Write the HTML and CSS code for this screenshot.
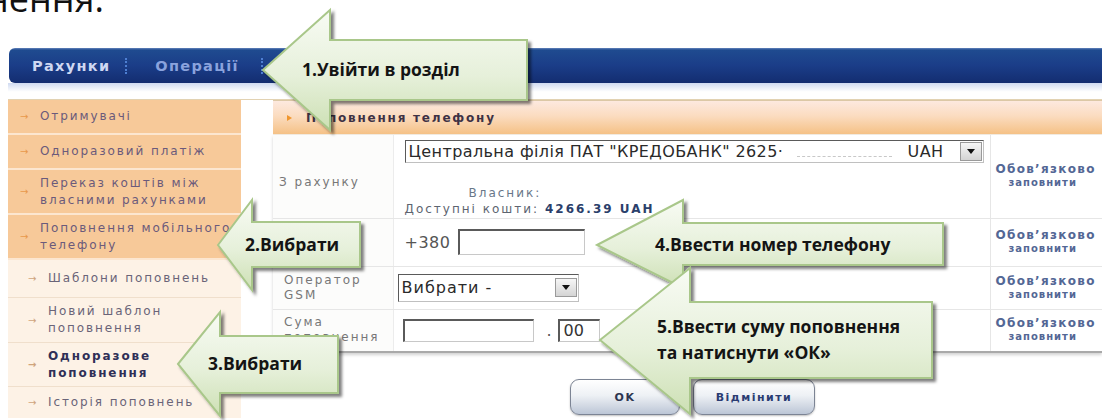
FILE: index.html
```html
<!DOCTYPE html>
<html lang="uk">
<head>
<meta charset="utf-8">
<title>Поповнення телефону</title>
<link rel="stylesheet" href="styles.css">
</head>
<body>
<div class="slide">
  <div class="slide-title"><span>нення.</span></div>

  <div class="bank">
    <nav class="topnav">
      <span class="nav-link">Рахунки</span>
      <span class="nav-sep"></span>
      <span class="nav-link muted">Операції</span>
      <span class="nav-sep last"></span>
    </nav>
    <div class="nav-fade"></div>

    <div class="workspace">
      <ul class="sidebar">
        <li class="menu-item"><span class="bullet">→</span>Отримувачі</li>
        <li class="menu-item"><span class="bullet">→</span>Одноразовий платіж</li>
        <li class="menu-item double"><span class="bullet">→</span><span>Переказ коштів між<br>власними рахунками</span></li>
        <li class="menu-item double"><span class="bullet">→</span><span>Поповнення мобільного<br>телефону</span></li>
        <li class="sub-item"><span class="bullet">→</span>Шаблони поповнень</li>
        <li class="sub-item double"><span class="bullet">→</span><span>Новий шаблон<br>поповнення</span></li>
        <li class="sub-item double current"><span class="bullet">→</span><span>Одноразове<br>поповнення</span></li>
        <li class="sub-item"><span class="bullet">→</span>Історія поповнень</li>
      </ul>

      <main class="panel">
        <div class="panel-head"><span class="head-mark"></span>Поповнення телефону</div>

        <table class="form">
          <colgroup>
            <col class="col-label">
            <col class="col-field">
            <col>
          </colgroup>
          <tr class="row-account">
            <td class="label-cell">З рахунку</td>
            <td class="field-cell">
              <div class="select wide">
                <span>Центральна філія ПАТ "КРЕДОБАНК" 2625·</span>
                <span class="masked"></span>
                <span class="currency">UAH</span>
                <span class="drop"></span>
              </div>
              <div class="owner">Власник:</div>
              <div class="funds">Доступні кошти: <b>4266.39 UAH</b></div>
            </td>
            <td class="note-cell"><span class="note-main">Обов’язково</span><span class="note-sub">заповнити</span></td>
          </tr>
          <tr class="row-phone">
            <td class="label-cell"></td>
            <td class="field-cell"><span class="prefix">+380</span><span class="textbox phone"></span></td>
            <td class="note-cell"><span class="note-main">Обов’язково</span><span class="note-sub">заповнити</span></td>
          </tr>
          <tr class="row-operator">
            <td class="label-cell">Оператор<br>GSM</td>
            <td class="field-cell">
              <div class="select narrow"><span class="select-value">Вибрати -</span><span class="drop"></span></div>
            </td>
            <td class="note-cell"><span class="note-main">Обов’язково</span><span class="note-sub">заповнити</span></td>
          </tr>
          <tr class="row-amount">
            <td class="label-cell">Сума<br>поповнення</td>
            <td class="field-cell"><span class="textbox sum"></span><span class="dot">.</span><span class="textbox cents">00</span></td>
            <td class="note-cell"><span class="note-main">Обов’язково</span><span class="note-sub">заповнити</span></td>
          </tr>
        </table>

        <div class="actions">
          <button class="btn btn-ok">OK</button>
          <button class="btn btn-cancel">Відмінити</button>
        </div>
      </main>
    </div>
  </div>

  <svg class="callouts" width="1102" height="420" viewBox="0 0 1102 420">
    <defs>
      <linearGradient id="calloutFill" x1="0" y1="0" x2="0" y2="1">
        <stop offset="0" stop-color="#f8fbf4"/>
        <stop offset="0.55" stop-color="#e6f0da"/>
        <stop offset="1" stop-color="#cde0b4"/>
      </linearGradient>
      <filter id="calloutShadow" x="-10%" y="-10%" width="130%" height="140%">
        <feDropShadow dx="3" dy="3" stdDeviation="1.4" flood-color="#000" flood-opacity="0.5"/>
      </filter>
    </defs>
    <g class="callout-shapes" filter="url(#calloutShadow)">
      <polygon class="callout-shape" points="263,70 330,10 330,40 527,40 527,100 330,100 330,130"/>
      <polygon class="callout-shape" points="218,245 252,200 252,222 360,222 360,267 252,267 252,290"/>
      <polygon class="callout-shape" points="178,364 220,312 220,336 338,336 338,393 220,393 220,416"/>
      <polygon class="callout-shape" points="597,245 683,200 683,223 943,223 943,265 683,265 683,288"/>
      <polygon class="callout-shape" points="600,340 690,268 690,302 932,302 932,378 690,378 690,414"/>
    </g>
    <text class="callout-text" x="302" y="76">1.Увійти в розділ</text>
    <text class="callout-text" x="245" y="251">2.Вибрати</text>
    <text class="callout-text" x="208" y="370">3.Вибрати</text>
    <text class="callout-text" x="655" y="251">4.Ввести номер телефону</text>
    <text class="callout-text" x="657" y="333">5.Ввести суму поповнення</text>
    <text class="callout-text" x="657" y="359">та натиснути «ОК»</text>
  </svg>
</div>
</body>
</html>
```

FILE: styles.css
```css
* { box-sizing: border-box; }

html, body { margin: 0; }

body {
  width: 1102px;
  height: 420px;
  overflow: hidden;
  background: #fff;
  font-family: "DejaVu Sans", Verdana, sans-serif;
}

.slide {
  position: relative;
  width: 1102px;
  height: 420px;
  overflow: hidden;
}

/* slide heading, only its lower edge shows */
.slide-title {
  height: 14px;
  overflow: hidden;
  font-family: "Open Sans", sans-serif;
  font-size: 36px;
  line-height: 36px;
  color: #111;
  white-space: nowrap;
}
.slide-title span { display: block; margin: -19px 0 0 -14px; }

.bank { margin: 34px 0 0 8px; }

/* top navigation */
.topnav {
  height: 35px;
  margin-left: 1px;
  border-radius: 6px 0 0 6px;
  background: linear-gradient(#6384bb 0, #1f4b90 2px, #1b3d88 50%, #132d70 100%);
  display: flex;
  align-items: center;
  padding-left: 23px;
  font-weight: bold;
  font-size: 14.5px;
  letter-spacing: 1.3px;
}
.nav-link { color: #cfd8f2; }
.nav-link.muted { color: #8aa3dd; }
.nav-sep {
  width: 0;
  height: 16px;
  border-left: 2px dotted #4e7fd2;
  margin: 0 28px 0 15px;
}
.nav-sep.last { margin-left: 22px; }

.nav-fade {
  height: 17px;
  background: linear-gradient(#cfdaf1, #ffffff 55%);
  border-bottom: 1px solid #e2d2b2;
}

.workspace { display: flex; gap: 32px; }

/* side menu */
.sidebar {
  width: 233px;
  flex: none;
  list-style: none;
  margin: 0;
  padding: 0;
  font-size: 12px;
  letter-spacing: 1.9px;
  line-height: 17px;
  color: #6b5a7b;
  white-space: nowrap;
}
.sidebar li { display: flex; align-items: center; }
.bullet {
  width: 20px;
  flex: none;
  font-size: 10px;
  letter-spacing: 0;
  color: #e8994c;
}
.menu-item {
  background: #f7c999;
  border-bottom: 2px solid #fce6d0;
  min-height: 35px;
  padding-left: 12px;
}
.menu-item.double { min-height: 45px; }
.sub-item {
  background: #fdf2e6;
  border-bottom: 1px solid #f0dfcc;
  min-height: 38px;
  padding-left: 20px;
  color: #6a6478;
}
.sub-item .bullet { color: #cfa47c; }
.sub-item.double { min-height: 45px; }
.sub-item.current { min-height: 44px; font-weight: bold; color: #2f2f57; }
.sub-item:last-child { border-bottom: 0; min-height: 31px; }

/* content panel */
.panel { flex: 1; min-width: 0; }

.panel-head {
  height: 35px;
  border-top: 1px solid #dcc8a6;
  border-bottom: 1px solid #f3ece2;
  background: linear-gradient(#fde9df, #fbdcc0 45%, #f5c186);
  display: flex;
  align-items: center;
  padding-left: 14px;
  font-weight: bold;
  font-size: 12px;
  letter-spacing: 1.8px;
  color: #3e3245;
  white-space: nowrap;
}
.head-mark {
  width: 0;
  height: 0;
  border-left: 5px solid #f0962e;
  border-top: 3.5px solid transparent;
  border-bottom: 3.5px solid transparent;
  margin-right: 14px;
}

.form {
  width: 100%;
  border-collapse: collapse;
  table-layout: fixed;
  font-size: 12px;
  letter-spacing: 2px;
  color: #777;
  border-bottom: 2px solid #a9a9a9;
  box-shadow: 0 2px 3px rgba(0, 0, 0, 0.18);
  white-space: nowrap;
}
.col-label { width: 120px; }
.col-field { width: 597px; }

.form td {
  padding: 0;
  border-bottom: 1px solid #e6e6e6;
  vertical-align: middle;
}
.row-account td { height: 83px; }
.row-phone td { height: 48px; }
.row-operator td { height: 43px; }
.row-amount td { height: 43px; border-bottom: 0; }

.label-cell {
  padding-left: 11px !important;
  line-height: 15px;
  border-right: 1px solid #ececec;
  background: #fcfcfb;
}
.row-account .label-cell { padding-top: 12px !important; padding-left: 6px !important; }
.field-cell {
  padding-left: 11px !important;
  border-right: 1px solid #e6e6e6;
  overflow: visible;
}
.row-account .field-cell { vertical-align: top; padding-top: 5px !important; }

.note-cell {
  font-weight: bold;
  color: #536795;
  padding-left: 5px !important;
  line-height: 13px;
}
.note-main { display: block; font-size: 12px; letter-spacing: 1.3px; }
.note-sub { display: block; font-size: 10px; letter-spacing: 1px; padding-left: 13px; }

/* form controls */
.select {
  display: flex;
  align-items: center;
  height: 23px;
  border: 1px solid;
  border-color: #5a5a5a #c0c0c0 #c0c0c0 #5a5a5a;
  background: #fff;
  font-size: 16px;
  letter-spacing: 0.4px;
  color: #2a2a2a;
  padding-left: 3px;
}
.select.wide { width: 579px; }
.select.narrow {
  width: 181px;
  height: 28px;
  margin-left: -7px;
  letter-spacing: 1px;
}
.select-value { flex: 1; }
.masked {
  flex: 1;
  height: 1px;
  border-bottom: 1px dashed #c8c8c8;
  margin: 10px 16px 0 14px;
}
.currency { margin-right: 16px; }
.drop {
  width: 22px;
  height: 19px;
  flex: none;
  border: 1px solid #9a9a9a;
  background: linear-gradient(#f6f6f6, #d4d4d4);
  display: flex;
  align-items: center;
  justify-content: center;
  margin-right: 1px;
}
.drop::before {
  content: "";
  border-top: 5px solid #111;
  border-left: 4px solid transparent;
  border-right: 4px solid transparent;
}

.owner { margin: 22px 0 0 64px; line-height: 16px; color: #697789; }
.funds { line-height: 16px; color: #5d6470; }
.funds b { color: #2b3f6b; }

.prefix { font-size: 16px; letter-spacing: 0.5px; color: #555; vertical-align: middle; }
.textbox {
  display: inline-block;
  vertical-align: middle;
  background: #fff;
  border: solid;
  border-width: 2px 1px 1px 2px;
  border-color: #5a5a5a #c8c8c8 #c8c8c8 #5a5a5a;
}
.textbox.phone { width: 127px; height: 26px; margin-left: 8px; }
.textbox.sum { width: 131px; height: 23px; margin-left: -2px; }
.dot { display: inline-block; vertical-align: middle; font-size: 16px; color: #555; margin: 0 6px 0 13px; letter-spacing: 0; }
.textbox.cents {
  width: 42px;
  height: 23px;
  font-size: 16px;
  letter-spacing: 0;
  line-height: 19px;
  color: #333;
  padding-left: 4px;
}

.actions {
  display: flex;
  gap: 13px;
  padding: 26px 0 0 297px;
}
.btn {
  height: 36px;
  border: 1px solid #7c8494;
  border-radius: 9px;
  background: linear-gradient(#ffffff, #eef1f5 45%, #bcc6d6);
  font: bold 11px "DejaVu Sans", sans-serif;
  letter-spacing: 1.5px;
  color: #2d3550;
  box-shadow: 0 1px 2px rgba(0, 0, 0, 0.25);
  padding: 0;
}
.btn-ok { width: 110px; }
.btn-cancel { width: 122px; color: #2a3c72; }

/* instruction callouts drawn over the page */
.callouts {
  position: absolute;
  left: 0;
  top: 0;
  pointer-events: none;
}
.callout-shape {
  fill: url(#calloutFill);
  stroke: #a9c78a;
  stroke-width: 2;
}
.callout-text {
  font-family: "Open Sans", sans-serif;
  font-weight: 700;
  font-size: 17.5px;
  fill: #141414;
}
```
